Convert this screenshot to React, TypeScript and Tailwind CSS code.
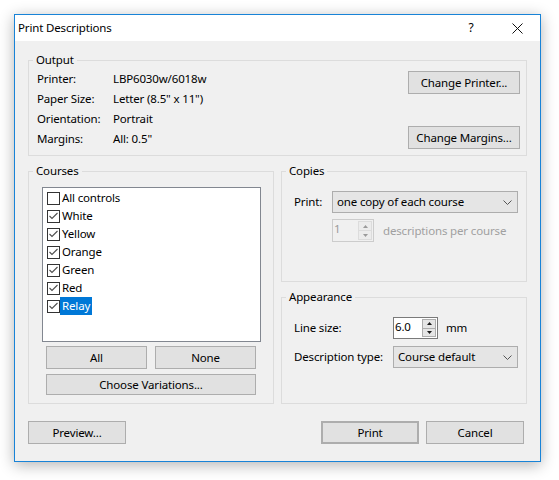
function Btn({
  children,
  className,
}: {
  children: React.ReactNode;
  className: string;
}) {
  return (
    <div
      className={
        "flex items-center justify-center bg-[#e1e1e1] border border-[#adadad] " +
        className
      }>
      {children}
    </div>
  );
}

function Group({
  title,
  className,
  children,
}: {
  title: string;
  className: string;
  children: React.ReactNode;
}) {
  return (
    <fieldset className={"border border-[#dcdcdc] " + className}>
      <legend className="ml-[4px] px-[3px] leading-[16px]">{title}</legend>
      {children}
    </fieldset>
  );
}

function Check({ checked }: { checked: boolean }) {
  return (
    <span className="flex items-center justify-center w-[13px] h-[13px] border border-[#333333] bg-white shrink-0">
      {checked && (
        <svg width="11" height="11" viewBox="0 0 11 11">
          <polyline
            points="1.5,5 4,7.5 9.5,2"
            fill="none"
            stroke="#4d4d4d"
            strokeWidth="1.1"
          />
        </svg>
      )}
    </span>
  );
}

function Chevron() {
  return (
    <svg width="9" height="5" viewBox="0 0 9 5">
      <polyline points="0.5,0.5 4.5,4.5 8.5,0.5" fill="none" stroke="#555555" strokeWidth="1" />
    </svg>
  );
}

function Combo({ value, className }: { value: string; className: string }) {
  return (
    <div
      className={
        "flex items-center justify-between h-[22px] border border-[#adadad] bg-[#e5e5e5] pl-[4px] pr-[5px] " +
        className
      }>
      <span>{value}</span>
      <Chevron />
    </div>
  );
}

function Arrow({ up, color }: { up: boolean; color: string }) {
  return (
    <svg width="5" height="3" viewBox="0 0 5 3">
      <polygon points={up ? "2.5,0 5,3 0,3" : "0,0 5,0 2.5,3"} fill={color} />
    </svg>
  );
}

function Spin({
  value,
  disabled,
  className,
}: {
  value: string;
  disabled: boolean;
  className: string;
}) {
  const arrow = disabled ? "#9a9a9a" : "#1a1a1a";
  return (
    <div
      className={
        "flex h-[22px] border " +
        (disabled
          ? "border-[#cccccc] bg-[#f0f0f0] text-[#9a9a9a] "
          : "border-[#7a7a7a] bg-white ") +
        className
      }>
      <span className="flex-1 pl-[1px] leading-[18px]">{value}</span>
      <div className="flex flex-col w-[14px] my-[1px] mr-[1px]">
        <span
          className={
            "flex-1 flex items-center justify-center border " +
            (disabled ? "border-[#dcdcdc] bg-[#ececec]" : "border-[#adadad] bg-[#e5e5e5]")
          }>
          <Arrow up color={arrow} />
        </span>
        <span
          className={
            "flex-1 flex items-center justify-center border border-t-0 " +
            (disabled ? "border-[#dcdcdc] bg-[#ececec]" : "border-[#adadad] bg-[#e5e5e5]")
          }>
          <Arrow up={false} color={arrow} />
        </span>
      </div>
    </div>
  );
}

const courses = [
  { name: "All controls", checked: false },
  { name: "White", checked: true },
  { name: "Yellow", checked: true },
  { name: "Orange", checked: true },
  { name: "Green", checked: true },
  { name: "Red", checked: true },
  { name: "Relay", checked: true, selected: true },
];

export default function App() {
  return (
    <div className="w-[559px] h-[480px] bg-white pl-[14px] pt-[14px] font-['Noto_Sans',sans-serif] text-[11.5px] tracking-[-0.15px] text-black">
      <div className="flex flex-col w-[527px] h-[448px] border border-[#1883d7] bg-[#f0f0f0] shadow-[0_3px_14px_rgba(0,0,0,0.3)]">
        {/* title bar */}
        <div className="flex items-center h-[26px] bg-white pl-[3px]">
          <span className="flex-1">Print Descriptions</span>
          <span className="flex items-center justify-center w-[46px] h-full text-[12px]">?</span>
          <span className="flex items-center justify-center w-[46px] h-full">
            <svg width="11" height="11" viewBox="0 0 11 11">
              <path d="M0.5 0.5 L10.5 10.5 M10.5 0.5 L0.5 10.5" stroke="#111111" strokeWidth="1" />
            </svg>
          </span>
        </div>

        <div className="px-[13px] pt-[11px]">
          <Group title="Output" className="pr-[6px] pb-[6px]">
            <div className="flex pl-[8px]">
              <div className="grid grid-cols-[76px_1fr] flex-1 pt-[1px]">
                <span className="flex items-center h-[20px]">Printer:</span>
                <span className="flex items-center h-[20px]">LBP6030w/6018w</span>
                <span className="flex items-center h-[20px]">Paper Size:</span>
                <span className="flex items-center h-[20px]">Letter (8.5" x 11")</span>
                <span className="flex items-center h-[20px]">Orientation:</span>
                <span className="flex items-center h-[20px]">Portrait</span>
                <span className="flex items-center h-[20px]">Margins:</span>
                <span className="flex items-center h-[20px]">All: 0.5"</span>
              </div>
              <div className="flex flex-col justify-between pt-[3px]">
                <Btn className="w-[112px] h-[23px]">Change Printer...</Btn>
                <Btn className="w-[112px] h-[23px]">Change Margins...</Btn>
              </div>
            </div>
          </Group>

          <div className="flex gap-[7px] mt-[7px]">
            <Group title="Courses" className="w-[246px] pb-[8px]">
              <div className="ml-[13px] mt-[8px] w-[219px] h-[155px] border border-[#828790] bg-white pt-[1px] pl-[4px]">
                {courses.map((c) => (
                  <div key={c.name} className="flex items-center h-[18px]">
                    <Check checked={c.checked} />
                    <span
                      className={
                        "flex items-center h-[18px] px-[2px] " +
                        (c.selected ? "bg-[#0078d7] text-white" : "")
                      }>
                      {c.name}
                    </span>
                  </div>
                ))}
              </div>
              <div className="flex gap-[8px] ml-[17px] mt-[4px]">
                <Btn className="w-[101px] h-[23px]">All</Btn>
                <Btn className="w-[101px] h-[23px]">None</Btn>
              </div>
              <Btn className="ml-[17px] mt-[5px] w-[210px] h-[21px]">Choose Variations...</Btn>
            </Group>

            <div className="flex flex-col w-[246px]">
              <Group title="Copies" className="pb-[39px]">
                <div className="pl-[12px]">
                  <div className="flex items-center mt-[12px]">
                    <span className="w-[38px]">Print:</span>
                    <Combo value="one copy of each course" className="w-[186px]" />
                  </div>
                  <div className="flex items-center mt-[6px] ml-[38px]">
                    <Spin value="1" disabled className="w-[42px] h-[23px]" />
                    <span className="ml-[9px] text-[#a0a0a0]">descriptions per course</span>
                  </div>
                </div>
              </Group>

              <Group title="Appearance" className="flex-1 mt-[7px]">
                <div className="pl-[12px]">
                  <div className="flex items-center mt-[12px]">
                    <span className="w-[99px]">Line size:</span>
                    <Spin value="6.0" disabled={false} className="w-[45px]" />
                    <span className="ml-[8px]">mm</span>
                  </div>
                  <div className="flex items-center mt-[7px]">
                    <span className="w-[99px]">Description type:</span>
                    <Combo value="Course default" className="w-[125px]" />
                  </div>
                </div>
              </Group>
            </div>
          </div>

          <div className="flex mt-[17px] pr-[3px]">
            <Btn className="w-[98px] h-[23px]">Preview...</Btn>
            <Btn className="ml-auto w-[98px] h-[23px] border-2 border-[#0078d7]">Print</Btn>
            <Btn className="ml-[7px] w-[98px] h-[23px]">Cancel</Btn>
          </div>
        </div>
      </div>
    </div>
  );
}
